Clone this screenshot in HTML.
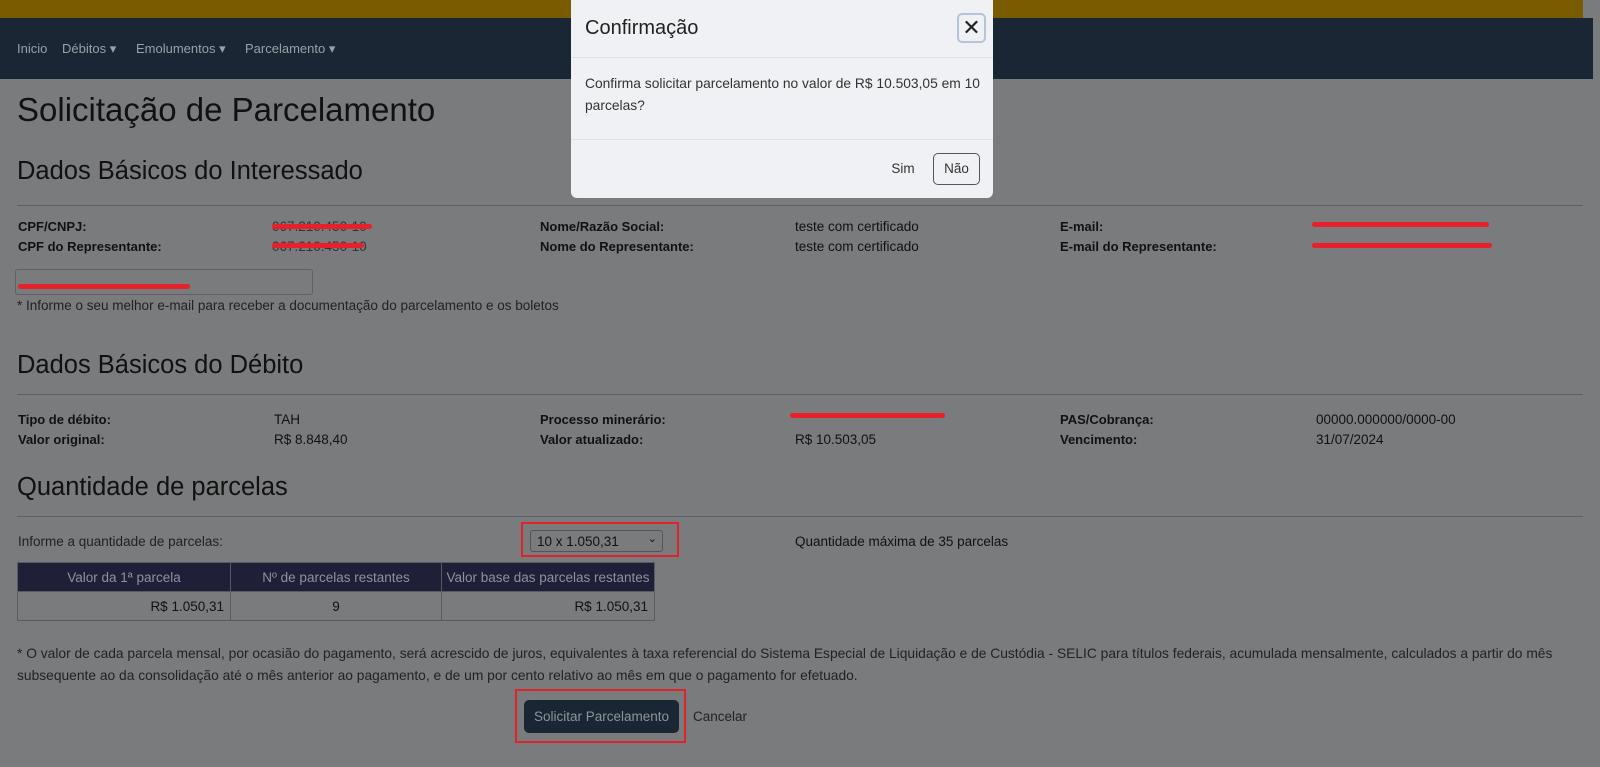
<!DOCTYPE html>
<html><head><meta charset="utf-8"><style>
*{box-sizing:border-box;margin:0;padding:0}
body{width:1600px;height:767px;overflow:hidden;background:#7a7b7d;font-family:"Liberation Sans","DejaVu Sans",sans-serif;color:#111;position:relative}
.abs{position:absolute;white-space:nowrap}
.gold{position:absolute;left:0;top:0;width:1583px;height:18px;background:#7a5c00}
.nav{position:absolute;left:0;top:18px;width:1593px;height:61px;background:#1a2633;color:#9aa0a8;font-size:13px}
.nav span{position:absolute;top:23px}
h1{position:absolute;left:17px;top:91px;font-size:33px;font-weight:normal;color:#111}
h2{position:absolute;left:17px;font-size:25.5px;font-weight:normal;color:#111}
.hr{position:absolute;left:17px;width:1566px;height:1px;background:#5e6064}
.s{font-size:13.5px}
.b{font-weight:bold;font-size:13px}
.red{position:absolute;height:5px;background:#e8202a;border-radius:3px}
.box{position:absolute;border:2px solid #e0222b}
table{position:absolute;left:17px;top:562px;border-collapse:collapse;font-size:13.5px}
td,th{border:1px solid #5a5b60;height:29px}
th{background:#1f2038;color:#8f90a0;font-weight:normal;width:213px}
td{text-align:right;padding-right:6px;color:#111}
.modal{position:absolute;left:571px;top:0;width:422px;height:198px;background:#f0f1f4;border-radius:0 0 6px 6px}
</style></head><body>
<div class="gold"></div>
<div class="nav"><span style="left:17px">Inicio</span><span style="left:62px">Débitos ▾</span><span style="left:136px">Emolumentos ▾</span><span style="left:245px">Parcelamento ▾</span></div>
<h1>Solicitação de Parcelamento</h1>
<h2 style="top:157px">Dados Básicos do Interessado</h2>
<div class="hr" style="top:205px"></div>
<div class="abs b" style="left:18px;top:219px">CPF/CNPJ:</div>
<div class="abs b" style="left:18px;top:239px">CPF do Representante:</div>
<div class="abs s" style="left:272px;top:219px;color:#333">067.210.450-10</div>
<div class="abs s" style="left:272px;top:239px;color:#333">067.210.450-10</div>
<div class="red" style="left:272px;top:224px;width:100px"></div>
<div class="red" style="left:272px;top:243px;width:92px"></div>
<div class="abs b" style="left:540px;top:219px">Nome/Razão Social:</div>
<div class="abs b" style="left:540px;top:239px">Nome do Representante:</div>
<div class="abs s" style="left:795px;top:219px">teste com certificado</div>
<div class="abs s" style="left:795px;top:239px">teste com certificado</div>
<div class="abs b" style="left:1060px;top:219px">E-mail:</div>
<div class="abs b" style="left:1060px;top:239px">E-mail do Representante:</div>
<div class="red" style="left:1312px;top:222px;width:177px"></div>
<div class="red" style="left:1312px;top:243px;width:180px"></div>
<div class="abs" style="left:15px;top:269px;width:298px;height:26px;border:1px solid #5e6064;border-radius:3px"></div>
<div class="red" style="left:18px;top:284px;width:172px"></div>
<div class="abs s" style="left:17px;top:298px;color:#222">* Informe o seu melhor e-mail para receber a documentação do parcelamento e os boletos</div>
<h2 style="top:351px">Dados Básicos do Débito</h2>
<div class="hr" style="top:394px"></div>
<div class="abs b" style="left:18px;top:412px">Tipo de débito:</div>
<div class="abs b" style="left:18px;top:432px">Valor original:</div>
<div class="abs s" style="left:274px;top:412px">TAH</div>
<div class="abs s" style="left:274px;top:432px">R$ 8.848,40</div>
<div class="abs b" style="left:540px;top:412px">Processo minerário:</div>
<div class="abs b" style="left:540px;top:432px">Valor atualizado:</div>
<div class="red" style="left:790px;top:413px;width:155px"></div>
<div class="abs s" style="left:795px;top:432px">R$ 10.503,05</div>
<div class="abs b" style="left:1060px;top:412px">PAS/Cobrança:</div>
<div class="abs b" style="left:1060px;top:432px">Vencimento:</div>
<div class="abs s" style="left:1316px;top:412px">00000.000000/0000-00</div>
<div class="abs s" style="left:1316px;top:432px">31/07/2024</div>
<h2 style="top:473px">Quantidade de parcelas</h2>
<div class="hr" style="top:516px"></div>
<div class="abs s" style="left:18px;top:534px;color:#222">Informe a quantidade de parcelas:</div>
<div class="box" style="left:521px;top:522px;width:158px;height:35px"></div>
<div class="abs s" style="left:530px;top:530px;width:133px;height:22px;border:1px solid #555;border-radius:3px;padding:3px 6px">10 x 1.050,31<span style="position:absolute;right:5px;top:1px;font-size:11px">⌄</span></div>
<div class="abs s" style="left:795px;top:534px">Quantidade máxima de 35 parcelas</div>
<table><tr><th>Valor da 1ª parcela</th><th style="width:211px">Nº de parcelas restantes</th><th>Valor base das parcelas restantes</th></tr>
<tr><td>R$ 1.050,31</td><td style="text-align:center;padding:0">9</td><td>R$ 1.050,31</td></tr></table>
<div class="abs" style="left:17px;top:643px;line-height:22px;color:#222;font-size:13.8px">* O valor de cada parcela mensal, por ocasião do pagamento, será acrescido de juros, equivalentes à taxa referencial do Sistema Especial de Liquidação e de Custódia - SELIC para títulos federais, acumulada mensalmente, calculados a partir do mês<br>subsequente ao da consolidação até o mês anterior ao pagamento, e de um por cento relativo ao mês em que o pagamento for efetuado.</div>
<div class="box" style="left:515px;top:689px;width:171px;height:54px"></div>
<div class="abs s" style="left:524px;top:700px;width:155px;height:33px;background:#1a2633;color:#8e949c;border-radius:5px;text-align:center;line-height:33px">Solicitar Parcelamento</div>
<div class="abs s" style="left:693px;top:709px;color:#222">Cancelar</div>
<div class="modal">
<div class="abs" style="left:14px;top:17px;font-size:20px;color:#222">Confirmação</div>
<div class="abs" style="left:386px;top:13px;width:29px;height:30px;border:2px solid #b5c4d8;border-radius:5px;text-align:center;font-size:22px;line-height:25px;color:#222">✕</div>
<div class="abs" style="left:0;top:57px;width:422px;height:1px;background:#dde0e4"></div>
<div class="abs" style="left:14px;top:73px;line-height:22px;color:#333;font-size:13.8px">Confirma solicitar parcelamento no valor de R$ 10.503,05 em 10<br>parcelas?</div>
<div class="abs" style="left:0;top:139px;width:422px;height:1px;background:#dde0e4"></div>
<div class="abs s" style="left:309px;top:153px;width:46px;height:32px;line-height:32px;text-align:center;color:#333">Sim</div>
<div class="abs s" style="left:362px;top:153px;width:47px;height:32px;line-height:30px;text-align:center;border:1px solid #555;border-radius:5px;color:#333">Não</div>
</div>
</body></html>
